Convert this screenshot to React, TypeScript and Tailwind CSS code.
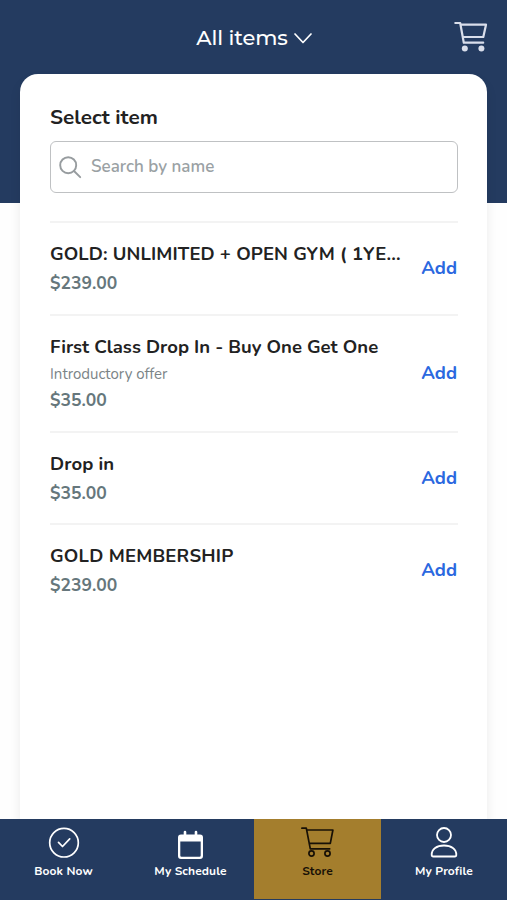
import { useState } from "react";

const items = [
  { name: "GOLD: UNLIMITED + OPEN GYM ( 1YE...", price: "$239.00", height: "h-[93px]", text: "tracking-[0.1px]" },
  { name: "First Class Drop In - Buy One Get One", note: "Introductory offer", price: "$35.00", height: "h-[117px]", text: "tracking-[0.02px]" },
  { name: "Drop in", price: "$35.00", height: "h-[92px] pt-px", text: "tracking-[0.1px]" },
  { name: "GOLD MEMBERSHIP", price: "$239.00", height: "h-[92px] pt-px", text: "tracking-[0.2px]" },
];

function HeaderCart() {
  return (
    <svg width="34" height="32" viewBox="0 0 34 32" fill="none" stroke="#d9deeb" strokeWidth="2.2" strokeLinejoin="round" strokeLinecap="round">
      <path d="M1.3 2h4.9l3.6 19.7h19.4M6.6 3.7h25.4l-2.7 12.3H9" />
      <circle cx="10.8" cy="27.5" r="3" fill="#d9deeb" stroke="none" />
      <circle cx="27.4" cy="27.5" r="3" fill="#d9deeb" stroke="none" />
    </svg>
  );
}

function CheckIcon() {
  return (
    <svg width="32" height="32" viewBox="0 0 32 32" fill="none" stroke="#fff" strokeWidth="1.7" strokeLinecap="round" strokeLinejoin="round">
      <circle cx="16" cy="15.7" r="14.3" />
      <path d="M10.5 15.3l4 4.2 7.2-7.6" />
    </svg>
  );
}

function CalendarIcon() {
  return (
    <svg width="32" height="32" viewBox="0.5 0 32 32">
      <path fill="#fff" fillRule="evenodd" d="M9.2 5a1.3 1.3 0 0 1 2.6 0v2.5h8.4V5a1.3 1.3 0 0 1 2.6 0v2.5h2.7a3 3 0 0 1 3 3V29a3 3 0 0 1-3 3h-19a3 3 0 0 1-3-3V10.5a3 3 0 0 1 3-3h2.7zM5.8 14.5v14a1.2 1.2 0 0 0 1.2 1.2h18a1.2 1.2 0 0 0 1.2-1.2v-14z" />
    </svg>
  );
}

function StoreIcon() {
  return (
    <svg width="34" height="32" viewBox="0.5 0 34 32" fill="none" stroke="#171006" strokeWidth="1.7" strokeLinejoin="round" strokeLinecap="round">
      <path d="M1.4 1.2h4.4l4 20.6h19.4M6.2 3h26.2l-2.6 13.4H8.7" />
      <circle cx="11" cy="26.5" r="2.6" />
      <circle cx="27" cy="26.5" r="2.6" />
    </svg>
  );
}

function ProfileIcon() {
  return (
    <svg width="32" height="32" viewBox="0 0 32 32" fill="none" stroke="#fff" strokeWidth="1.8" strokeLinejoin="round">
      <circle cx="16" cy="8" r="7" />
      <path d="M3.7 27.7c0-5.8 5-9.2 12.3-9.2s12.3 3.4 12.3 9.2c0 1-.6 1.8-1.6 1.8H5.3c-1 0-1.6-.8-1.6-1.8z" />
    </svg>
  );
}

const tabs = [
  { label: "Book Now", icon: <CheckIcon /> },
  { label: "My Schedule", icon: <CalendarIcon /> },
  { label: "Store", icon: <StoreIcon /> },
  { label: "My Profile", icon: <ProfileIcon /> },
];

export default function App() {
  const [active, setActive] = useState("Store");

  return (
    <div className="flex h-[900px] w-[507px] flex-col overflow-hidden bg-[linear-gradient(#243b60_203px,#fefefe_203px)] font-[Nunito,Lato,sans-serif] text-[#222]">
      {/* Header */}
      <header className="grid h-[74px] shrink-0 grid-cols-[1fr_auto_1fr] items-center">
        <span />
        <button className="flex items-center gap-[6px] pt-[3px] pl-px text-white">
          <span className="pb-0.5 font-[Montserrat,Lato,sans-serif] text-[21px] font-medium leading-7 tracking-[-0.1px]">All items</span>
          <svg width="18" height="11" viewBox="0 0 18 11" fill="none" stroke="currentColor" strokeWidth="1.7" strokeLinecap="round" strokeLinejoin="round">
            <path d="M1 1l8 8.5L17 1" />
          </svg>
        </button>
        <button className="mr-[19px] justify-self-end">
          <HeaderCart />
        </button>
      </header>

      {/* Item picker */}
      <main className="mx-5 min-h-0 flex-1 rounded-t-[18px] bg-white px-[30px] pt-[29px] shadow-[0_6px_12px_rgba(0,0,0,0.08)]">
        <h1 className="text-[20.7px] font-bold leading-7">Select item</h1>
        <label className="mt-[10px] -mr-px flex h-[52px] items-center gap-[9px] rounded-md border border-[#bfc1c3] pl-2">
          <svg width="23" height="23" viewBox="0 0 23 23" fill="none" stroke="#979c9f" strokeWidth="1.9" strokeLinecap="round">
            <circle cx="9.2" cy="9.2" r="8" />
            <path d="M15 15l6.2 6.2" />
          </svg>
          <span className="text-[17px] font-semibold leading-6 text-[#9aa1a4]">Search by name</span>
        </label>

        <ul className="mt-7 -mr-px">
          {items.map((item) => (
            <li key={item.name} className={`flex items-center justify-between border-t-2 border-[#f3f3f3] ${item.height}`}>
              <div className="whitespace-nowrap">
                <div className={`text-[18.5px] font-bold leading-[29px] ${item.text}`}>{item.name}</div>
                {item.note && <div className="text-[15px] leading-6 text-[#7b8487]">{item.note}</div>}
                <div className="text-[17.5px] font-bold leading-[29px] text-[#66777c]">{item.price}</div>
              </div>
              <button className="pr-px pb-px text-[18.5px] font-bold leading-7 text-[#2b68e0]">Add</button>
            </li>
          ))}
        </ul>
      </main>

      {/* Tab bar */}
      <nav className="z-10 grid h-[81px] shrink-0 grid-cols-[127px_127px_127px_126px] bg-[#243b60]">
        {tabs.map((tab) => (
          <button
            key={tab.label}
            onClick={() => setActive(tab.label)}
            className={`flex flex-col items-center pt-2 ${active === tab.label ? "mb-px bg-[#a47e2d] text-[#171006]" : "text-white"}`}
          >
            {tab.icon}
            <span className="mt-1 text-xs font-bold leading-4 tracking-[0.1px]">{tab.label}</span>
          </button>
        ))}
      </nav>
    </div>
  );
}
